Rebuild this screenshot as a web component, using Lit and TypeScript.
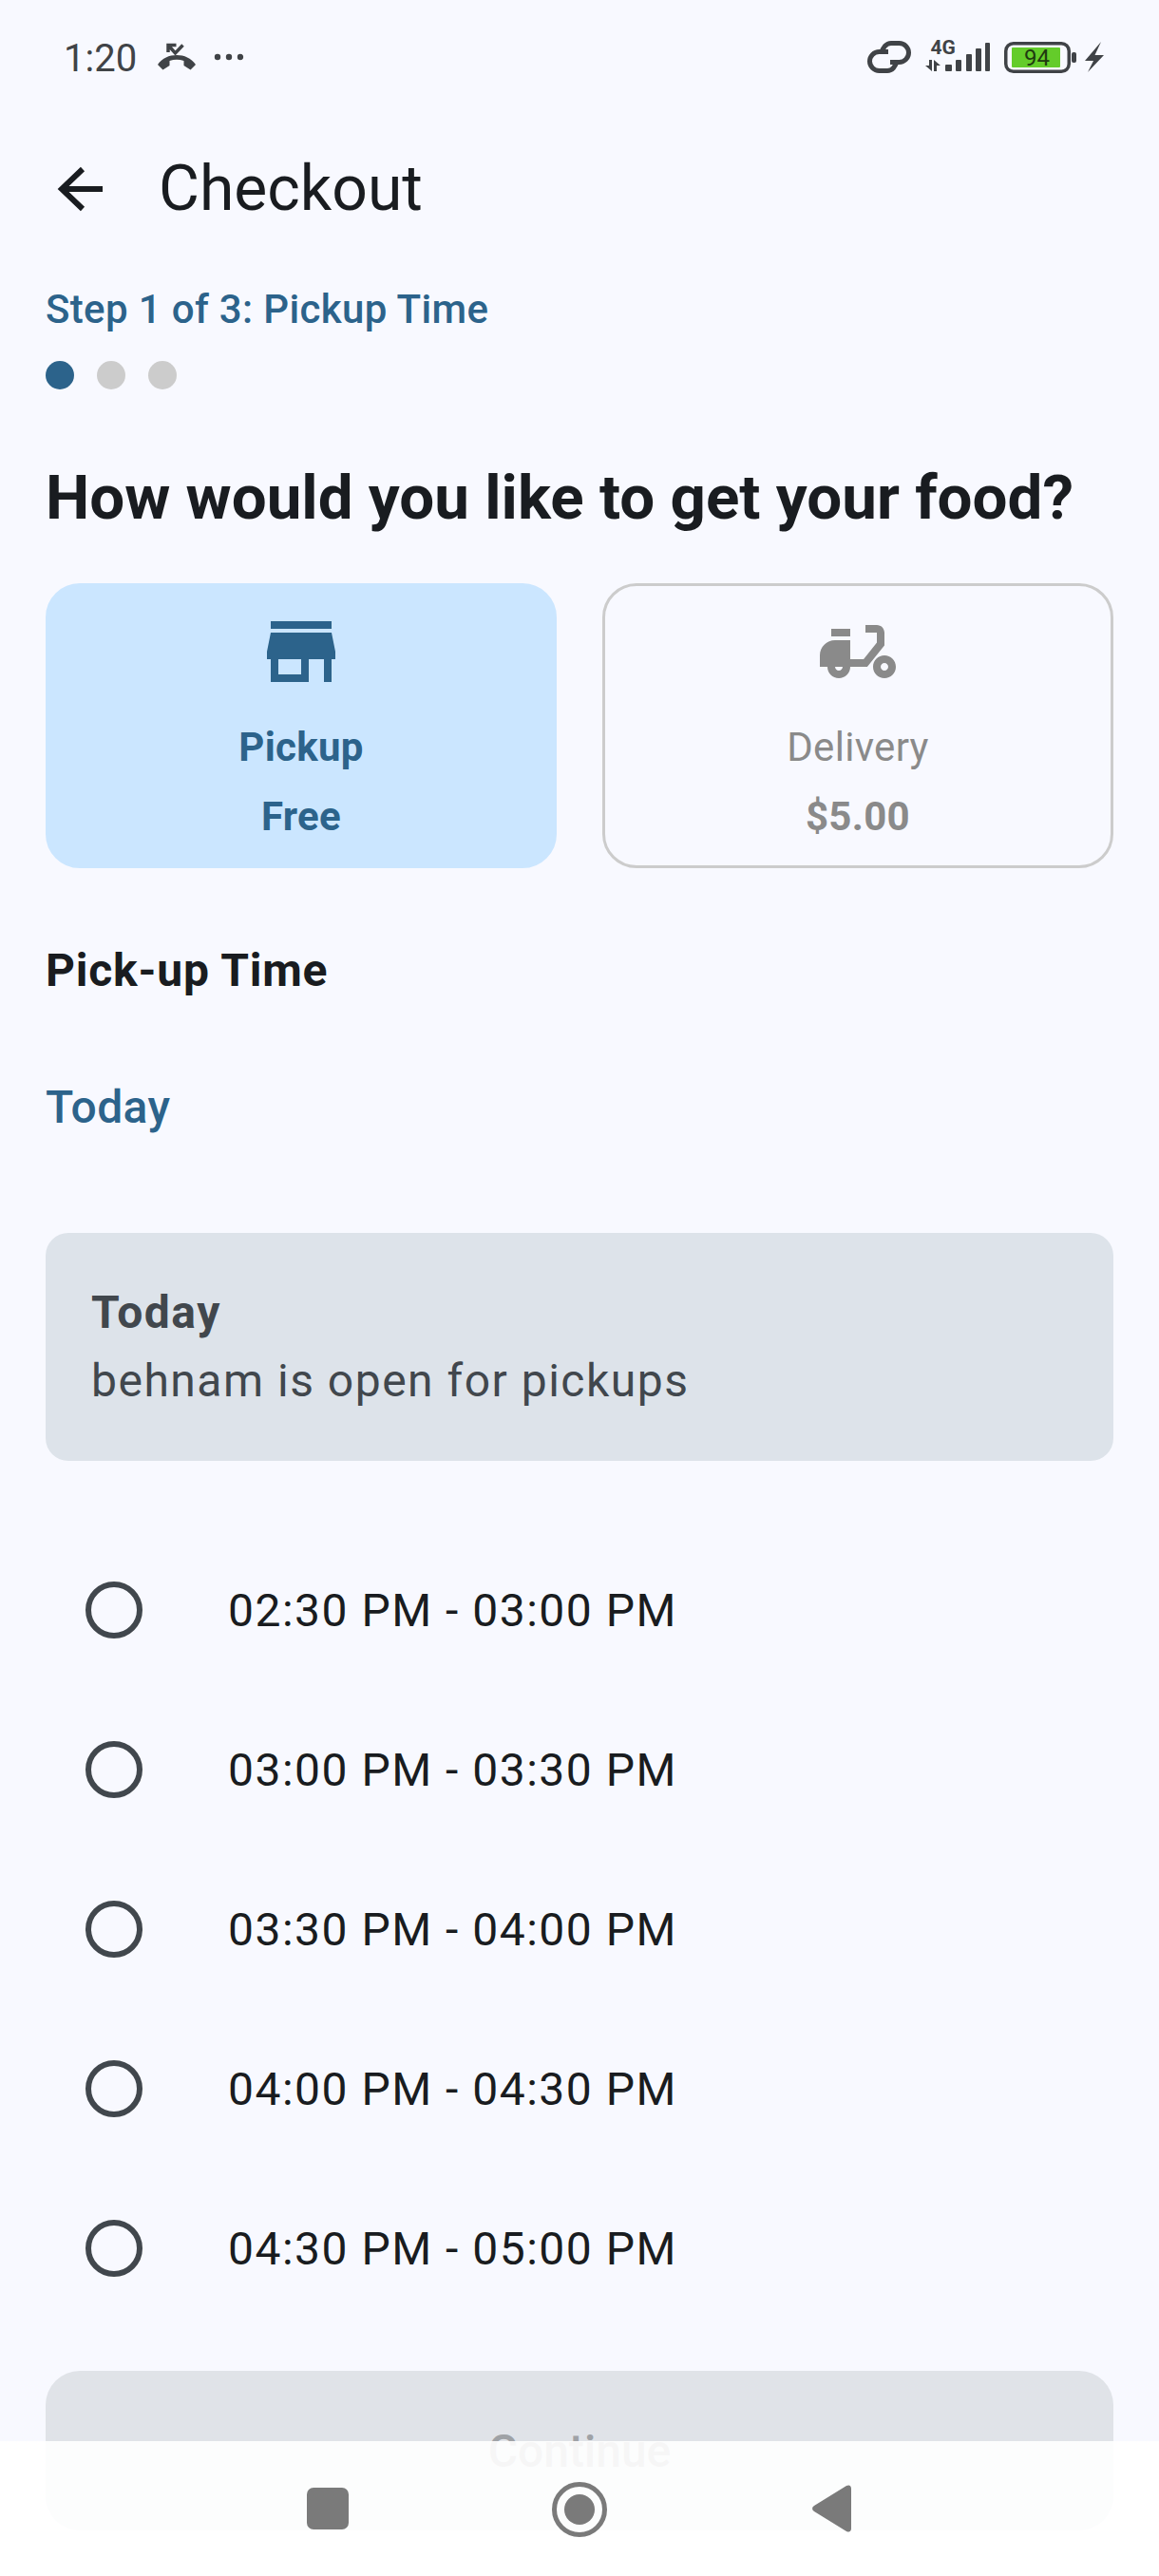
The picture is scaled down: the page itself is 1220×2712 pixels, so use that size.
import { LitElement, html, css } from "lit";
import { customElement } from "lit/decorators.js";

const SLOTS = [
  "02:30 PM - 03:00 PM",
  "03:00 PM - 03:30 PM",
  "03:30 PM - 04:00 PM",
  "04:00 PM - 04:30 PM",
  "04:30 PM - 05:00 PM",
];

@customElement("app-root")
export class AppRoot extends LitElement {
  static styles = css`
    :host {
      display: block;
      position: relative;
      width: 1220px;
      height: 2712px;
      overflow: hidden;
      background: #f8f9ff;
      font-family: Roboto, "Liberation Sans", sans-serif;
      color: #191c20;
    }
    svg { display: block; flex: none; }
    .status {
      height: 120px;
      padding: 0 58px 0 67px;
      box-sizing: border-box;
      display: flex;
      align-items: center;
      color: #404347;
    }
    .time { font-size: 40px; line-height: 40px; width: 77px; margin: 3px 22px 0 0; white-space: nowrap; }
    .call { margin-right: 19px; }
    .spacer { flex: 1; }
    .signal { margin: 0 0 6px 15px; }
    .battery { margin-left: 15px; }
    .bolt { margin-left: 9px; }
    .appbar {
      height: 158px;
      display: flex;
      align-items: center;
      padding-left: 60px;
      box-sizing: border-box;
    }
    .appbar svg { margin-right: 59px; }
    .title { font-size: 66px; line-height: 78px; }
    .content { padding: 0 48px; }
    .step {
      font-size: 42px;
      line-height: 48px;
      font-weight: 500;
      color: #2c638b;
      margin-top: 24px;
      letter-spacing: 0.35px;
    }
    .dots { display: flex; gap: 24px; margin-top: 30px; }
    .dot { width: 30px; height: 30px; border-radius: 50%; background: #cccccc; }
    .dot.on { background: #2c638b; }
    h1 {
      margin: 78px 0 0;
      font-size: 65.5px;
      line-height: 72px;
      font-weight: 700;
      white-space: nowrap;
    }
    .options { display: flex; gap: 48px; margin-top: 54px; }
    .option {
      flex: 1;
      height: 300px;
      box-sizing: border-box;
      border-radius: 36px;
      border: 3px solid #cccccc;
      color: #8a8a8a;
      display: flex;
      flex-direction: column;
      align-items: center;
      padding-top: 21px;
      font-size: 42px;
      letter-spacing: 0.3px;
    }
    .option.on {
      border-color: #cbe6ff;
      background: #cbe6ff;
      color: #2c638b;
      font-weight: 700;
    }
    .option .name { margin-top: 28px; line-height: 50px; }
    .option .price { margin-top: 23px; line-height: 50px; font-weight: 700; }
    .pick { font-size: 48px; line-height: 56px; font-weight: 700; margin-top: 80px; letter-spacing: 0.8px; }
    .today { font-size: 48px; line-height: 56px; font-weight: 500; color: #2c638b; margin-top: 88px; letter-spacing: 0.45px; }
    .info {
      margin-top: 104px;
      height: 240px;
      box-sizing: border-box;
      border-radius: 24px;
      background: #dde3ea;
      color: #41474d;
      padding: 48px 48px 0;
      font-size: 48px;
      letter-spacing: 1.5px;
      line-height: 72px;
    }
    .info b { display: block; font-weight: 700; }
    .slots { margin-top: 73px; }
    .slot {
      height: 168px;
      display: flex;
      align-items: center;
      padding-left: 42px;
      font-size: 48px;
      letter-spacing: 1.5px;
    }
    .radio {
      width: 60px;
      height: 60px;
      box-sizing: border-box;
      border: 6px solid #41474d;
      border-radius: 50%;
      margin-right: 90px;
      flex: none;
    }
    .continue {
      margin-top: 45px;
      height: 168px;
      border-radius: 36px;
      background: #e0e3e8;
      color: #9fa2a6;
      font-size: 48px;
      font-weight: 500;
      display: flex;
      align-items: center;
      justify-content: center;
    }
    .nav {
      position: absolute;
      left: 0;
      right: 0;
      bottom: 0;
      height: 142px;
      background: rgba(255, 255, 255, 0.9);
    }
    .nav .square { position: absolute; left: 323px; top: 49px; }
    .nav .home { position: absolute; left: 581px; top: 42px; }
    .nav .back { position: absolute; left: 855px; top: 46px; }
  `;

  render() {
    return html`
      <div class="status">
        <span class="time">1:20</span>
        <svg class="call" width="40" height="30" viewBox="0 0 40 30" fill="#404347">
          <path d="M0 23c5-7 12-10 20-10s15 3 20 10l-5.500 5.500-7-4.500v-5c-2.500-.8-5-1.200-7.500-1.200s-5 .4-7.500 1.200v5l-7 4.500z"/>
          <path d="M19.500 2.500H11V10M11 2.500l7.500 8.500 8-8.500" fill="none" stroke="#404347" stroke-width="3.500"/>
        </svg>
        <svg width="32" height="8" viewBox="0 0 32 8" fill="#404347">
          <circle cx="4" cy="4" r="3.200"/><circle cx="16" cy="4" r="3.200"/><circle cx="28" cy="4" r="3.200"/>
        </svg>
        <span class="spacer"></span>
        <svg width="46" height="34" viewBox="0 0 46 34" fill="none" stroke="#404347" stroke-width="5">
          <path d="M15 13c1-6 5-10.500 10-10.500h8.500a10 10 0 0 1 0 20H24"/>
          <path d="M31 21c-1 6-5 10.500-10 10.500h-8.500a10 10 0 0 1 0-20H22"/>
        </svg>
        <svg class="signal" width="68" height="36" viewBox="0 -4 68 36" fill="#404347">
          <text x="5.500" y="14" font-family="Roboto" font-size="21" font-weight="700">4G</text>
          <path d="M0 26h4v-6h3v12zM9 32V20l7 6h-4v6z"/>
          <rect x="21" y="25" width="7" height="7" rx="1"/>
          <rect x="32" y="20" width="6" height="12" rx="1"/>
          <rect x="43" y="14" width="6" height="18" rx="1"/>
          <rect x="53" y="8" width="6" height="24" rx="1"/>
          <rect x="63" y="2" width="5" height="30" rx="1"/>
        </svg>
        <svg class="battery" width="76" height="33" viewBox="0 0 76 33">
          <rect x="1.750" y="1.750" width="66.500" height="29.500" rx="8" fill="none" stroke="#404347" stroke-width="3.500"/>
          <rect x="8" y="6" width="51" height="21" rx="1" fill="#64cc2a"/>
          <rect x="71" y="11" width="5" height="11" rx="2" fill="#404347"/>
          <text x="34.500" y="25" text-anchor="middle" font-family="Roboto" font-size="24" fill="#1f3a10">94</text>
        </svg>
        <svg class="bolt" width="20" height="32" viewBox="0 0 20 32" fill="#404347">
          <path d="M17 0L0 20h9L3 32l17-18h-9.500z"/>
        </svg>
      </div>

      <div class="appbar">
        <svg width="48" height="48" viewBox="0 0 48 48" fill="none" stroke="#191c20" stroke-width="6">
          <path d="M48 24H5M27 3L5 24l22 21"/>
        </svg>
        <span class="title">Checkout</span>
      </div>

      <div class="content">
        <div class="step">Step 1 of 3: Pickup Time</div>
        <div class="dots"><span class="dot on"></span><span class="dot"></span><span class="dot"></span></div>
        <h1>How would you like to get your food?</h1>
        <div class="options">
          <div class="option on">
            <svg width="96" height="96" viewBox="0 0 24 24" fill="currentColor">
              <path d="M20 4H4v2h16V4zm1 10v-2l-1-5H4l-1 5v2h1v6h10v-6h4v6h2v-6h1zm-9 4H6v-4h6v4z"/>
            </svg>
            <span class="name">Pickup</span>
            <span class="price">Free</span>
          </div>
          <div class="option">
            <svg width="96" height="96" viewBox="0 0 24 24" fill="currentColor">
              <path d="M19 7c0-1.100-.9-2-2-2h-3v2h3v2.650L13.520 14H10V9H6c-2.210 0-4 1.790-4 4v3h2c0 1.660 1.340 3 3 3s3-1.340 3-3h4.480L19 10.350V7zM7 17c-.55 0-1-.45-1-1h2c0 .55-.45 1-1 1z"/>
              <path d="M5 6h5v2H5zM19 13c-1.660 0-3 1.340-3 3s1.340 3 3 3 3-1.340 3-3-1.340-3-3-3zm0 4c-.55 0-1-.45-1-1s.45-1 1-1 1 .45 1 1-.45 1-1 1z"/>
            </svg>
            <span class="name">Delivery</span>
            <span class="price">$5.00</span>
          </div>
        </div>
        <div class="pick">Pick-up Time</div>
        <div class="today">Today</div>
        <div class="info">
          <b>Today</b>
          behnam is open for pickups
        </div>
        <div class="slots">
          ${SLOTS.map(
            (s) => html`<div class="slot"><span class="radio"></span><span>${s}</span></div>`
          )}
        </div>
        <div class="continue">Continue</div>
      </div>

      <div class="nav">
        <svg class="square" width="44" height="44" viewBox="0 0 44 44">
          <rect width="44" height="44" rx="7" fill="#7a7a7a"/>
        </svg>
        <svg class="home" width="58" height="60" viewBox="0 0 58 60">
          <circle cx="29" cy="30" r="26.500" fill="none" stroke="#7a7a7a" stroke-width="5"/>
          <circle cx="29" cy="30" r="16" fill="#7a7a7a"/>
        </svg>
        <svg class="back" width="42" height="50" viewBox="0 0 42 50">
          <path d="M2 22L36 1c3-1.500 5 0 5 3v42c0 3-2 4.500-5 3L2 28c-2.500-1.500-2.500-4.500 0-6z" fill="#7a7a7a"/>
        </svg>
      </div>
    `;
  }
}
